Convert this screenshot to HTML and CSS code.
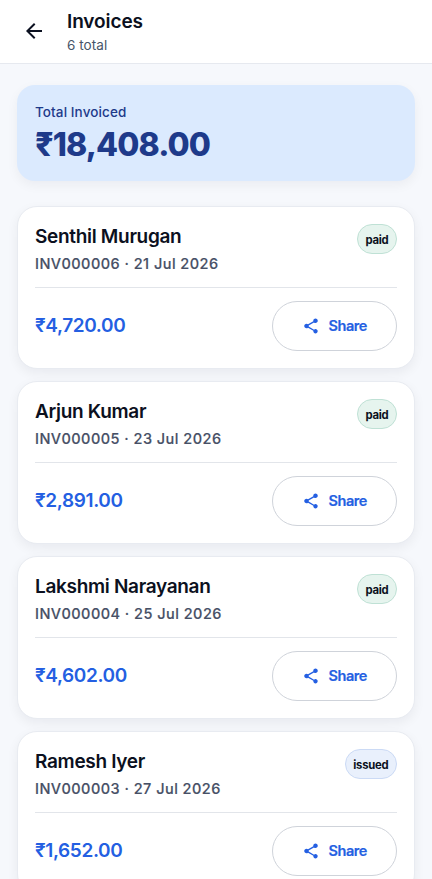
FILE: index.html
```html
<!DOCTYPE html>
<html lang="en">
<head>
<meta charset="utf-8">
<title>Invoices</title>
<link rel="stylesheet" href="styles.css">
</head>
<body>
<svg width="0" height="0" class="defs"><symbol id="share" viewBox="0 0 24 24"><path d="M18 16.08c-.76 0-1.44.3-1.96.77L8.91 12.7c.05-.23.09-.46.09-.7s-.04-.47-.09-.7l7.05-4.11c.54.5 1.25.81 2.04.81 1.66 0 3-1.34 3-3s-1.34-3-3-3-3 1.34-3 3c0 .24.04.47.09.7L8.04 9.81C7.5 9.31 6.79 9 6 9c-1.66 0-3 1.34-3 3s1.34 3 3 3c.79 0 1.5-.31 2.04-.81l7.12 4.16c-.05.21-.08.43-.08.65 0 1.61 1.31 2.92 2.92 2.92s2.92-1.31 2.92-2.92-1.31-2.92-2.92-2.92z"/></symbol></svg>
<header class="bar">
<svg class="back" viewBox="0 0 24 24"><path d="M20 11H7.83l5.59-5.59L12 4l-8 8 8 8 1.41-1.41L7.83 13H20v-2z"/></svg>
<div><h1>Invoices</h1><p>6 total</p></div>
</header>
<main>
<section class="total"><p>Total Invoiced</p><strong>₹18,408.00</strong></section>
<article class="card"><div class="top"><div><h2>Senthil Murugan</h2><p class="meta">INV000006 · 21 Jul 2026</p></div><span class="badge paid">paid</span></div><div class="bottom"><b class="amount">₹4,720.00</b><button><svg viewBox="0 0 24 24"><use href="#share"/></svg><span>Share</span></button></div></article>
<article class="card"><div class="top"><div><h2>Arjun Kumar</h2><p class="meta">INV000005 · 23 Jul 2026</p></div><span class="badge paid">paid</span></div><div class="bottom"><b class="amount">₹2,891.00</b><button><svg viewBox="0 0 24 24"><use href="#share"/></svg><span>Share</span></button></div></article>
<article class="card"><div class="top"><div><h2>Lakshmi Narayanan</h2><p class="meta">INV000004 · 25 Jul 2026</p></div><span class="badge paid">paid</span></div><div class="bottom"><b class="amount">₹4,602.00</b><button><svg viewBox="0 0 24 24"><use href="#share"/></svg><span>Share</span></button></div></article>
<article class="card"><div class="top"><div><h2>Ramesh Iyer</h2><p class="meta">INV000003 · 27 Jul 2026</p></div><span class="badge issued">issued</span></div><div class="bottom"><b class="amount">₹1,652.00</b><button><svg viewBox="0 0 24 24"><use href="#share"/></svg><span>Share</span></button></div></article>
</main>
</body>
</html>
```
FILE: styles.css
```css
* { box-sizing: border-box; margin: 0; padding: 0; }
body { height: 879px; overflow: hidden; background: #f6f8fc; font-family: Inter, sans-serif; color: #0b1020; }
.defs { display: none; }
.bar { height: 64px; background: #fff; border-bottom: 1px solid #e6e9ef; display: flex; align-items: center; padding: 0 22px; gap: 21px; }
.back { width: 24px; height: 24px; fill: #0b1020; margin-top: -1px; }
.bar h1 { font-size: 19px; line-height: 27px; font-weight: 600; letter-spacing: -.1px; }
.bar p { font-size: 13.5px; line-height: 20px; color: #475569; letter-spacing: .05px; }
main { padding: 21px 17px 0; }
.total { height: 96px; border-radius: 18px; background: #dbeafe; color: #1e3a8a; padding: 17px 18px; margin-bottom: 25px; box-shadow: 0 4px 12px rgba(15,23,42,.05); }
.total p { font-size: 13.5px; line-height: 21px; font-weight: 500; letter-spacing: .1px; }
.total strong { display: block; font-size: 32px; line-height: 44px; font-weight: 800; letter-spacing: -.9px; }
.card { height: 163px; background: #fff; border: 1px solid #e8ebf1; border-radius: 20px; padding: 16px 17px; margin-bottom: 12px; box-shadow: 0 4px 12px rgba(15,23,42,.06); }
.top { height: 65px; display: flex; justify-content: space-between; align-items: flex-start; border-bottom: 1px solid #e2e5ea; }
.top h2 { font-size: 19px; line-height: 28px; font-weight: 600; letter-spacing: -.31px; }
.meta { font-size: 14.5px; line-height: 20px; margin-top: 3px; font-weight: 500; color: #475066; letter-spacing: .47px; -webkit-text-stroke: .15px currentColor; }
.badge { height: 30px; margin-top: 1px; padding: 0 7.6px; border-radius: 15px; border: 1px solid #bfe1d5; background: #e6f4ee; font-size: 11.3px; line-height: 30px; font-weight: 650; letter-spacing: -.25px; }
.issued { border-color: #cbdaf5; background: #e9f0fc; }
.bottom { display: flex; justify-content: space-between; align-items: center; height: 76px; }
.amount { font-size: 19px; line-height: 24px; padding-bottom: 1px; font-weight: 600; color: #245fe2; letter-spacing: -.38px; }
button { width: 125.5px; height: 50px; border: 1px solid #cfd3da; border-radius: 25px; background: #fff; color: #245fe2; font: 600 14.5px Inter, sans-serif; letter-spacing: -.45px; display: flex; align-items: center; justify-content: center; gap: 9px; }
button svg { width: 18px; height: 18px; fill: currentColor; }
button span { -webkit-text-stroke: .2px currentColor; padding-bottom: 1px; }
```
